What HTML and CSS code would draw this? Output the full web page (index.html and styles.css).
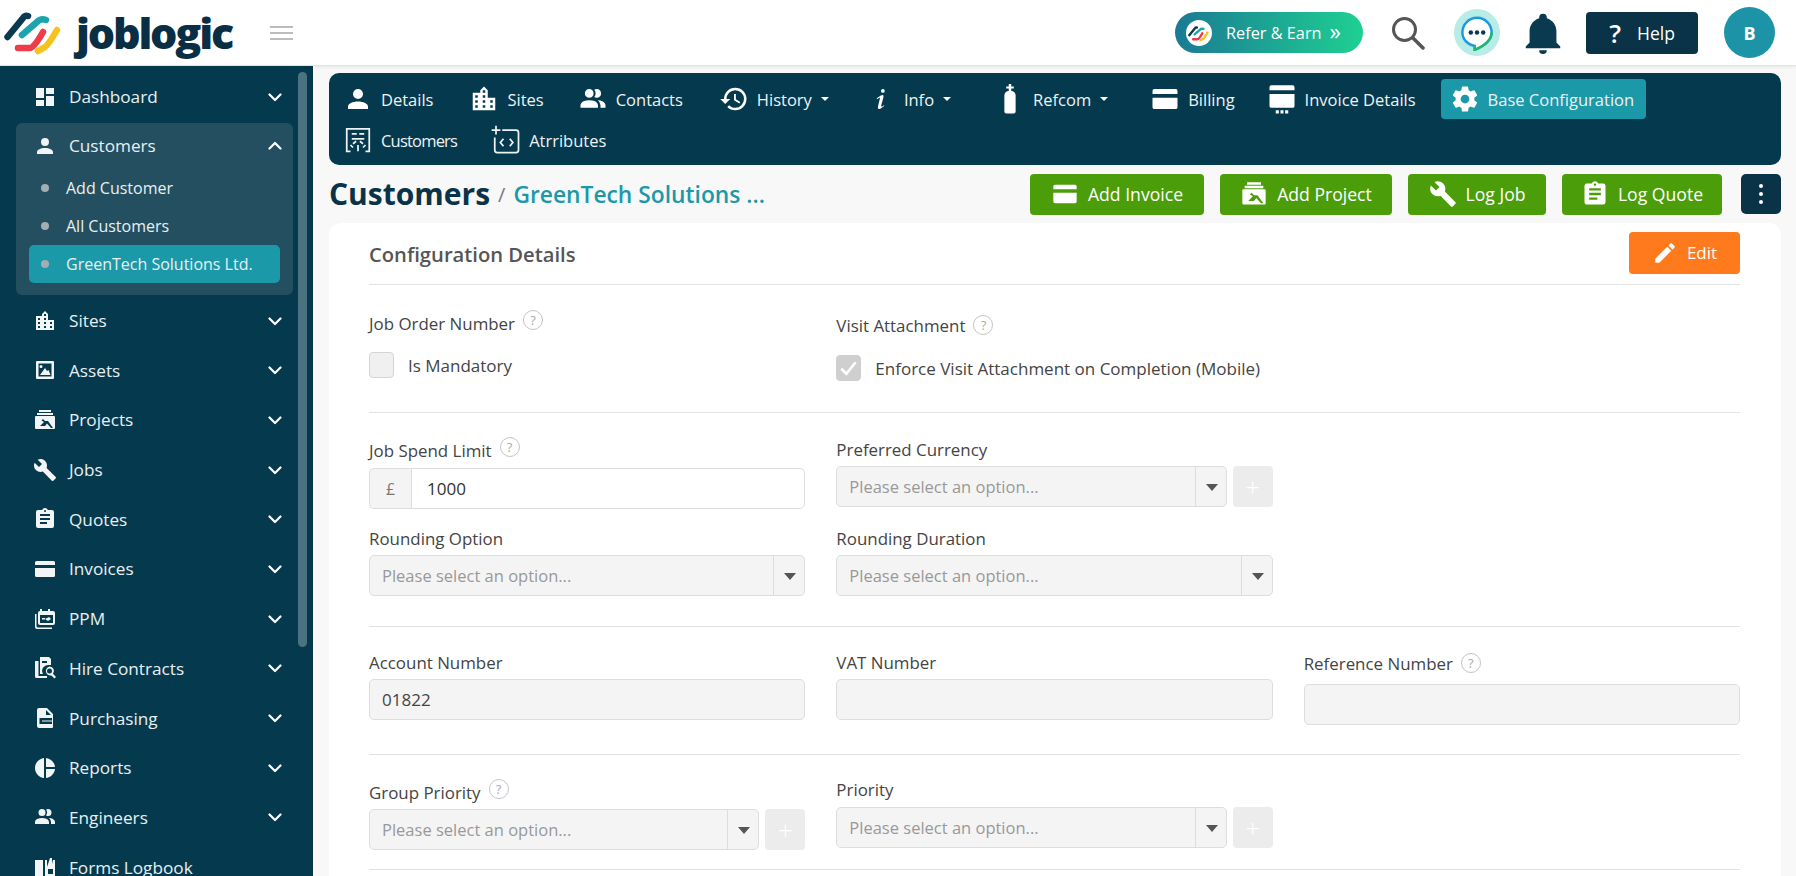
FILE: index.html
```html
<!DOCTYPE html>
<html>
  <head>
    <title>Joblogic - Base Configuration</title>
    <link rel="stylesheet" href="styles.css">
  </head>

  <body>
    <svg class="icon-defs">
      <symbol id="i-logo" viewBox="0 0 60 60">
        <path d="M3.5 36 L19 17 Q21 14 24 15" stroke="#0a3a50" stroke-width="6.5" stroke-linecap="round" fill="none"/>
        <path d="M18 34 L33 21 Q37 17 42 19" stroke="#1ba3ae" stroke-width="6.5" stroke-linecap="round" fill="none"/>
        <path d="M14 47 L26 47 Q30 47 39 31" stroke="#ee3d48" stroke-width="6.5" stroke-linecap="round" fill="none"/>
        <path d="M34 50 L41 46 Q45 43 53 29" stroke="#f6c21c" stroke-width="6.5" stroke-linecap="round" fill="none"/>
      </symbol>
      <symbol id="i-dashboard" viewBox="0 0 24 24"><path d="M13,3V9H21V3M13,21H21V11H13M3,21H11V15H3M3,13H11V3H3V13Z"/></symbol>
      <symbol id="i-user" viewBox="0 0 24 24"><path d="M12,4A4,4 0 0,1 16,8A4,4 0 0,1 12,12A4,4 0 0,1 8,8A4,4 0 0,1 12,4M12,14C16.42,14 20,15.79 20,18V20H4V18C4,15.79 7.58,14 12,14Z"/></symbol>
      <symbol id="i-city" viewBox="0 0 24 24"><path d="M19,15H17V13H19M19,19H17V17H19M13,7H11V5H13M13,11H11V9H13M13,15H11V13H13M13,19H11V17H13M7,11H5V9H7M7,15H5V13H7M7,19H5V17H7M15,11V5L12,2L9,5V7H3V21H21V11H15Z"/></symbol>
      <symbol id="i-asset" viewBox="0 0 24 24"><path fill-rule="evenodd" d="M4 3H20A1 1 0 0 1 21 4V20A1 1 0 0 1 20 21H4A1 1 0 0 1 3 20V4A1 1 0 0 1 4 3ZM5.5 5.5V18.5H18.5V5.5ZM8 7A1.5 1.5 0 1 1 8 10A1.5 1.5 0 0 1 8 7ZM7 17L12 10L14 13L15.5 12L17.5 17Z"/></symbol>
      <symbol id="i-project" viewBox="0 0 24 24"><path fill-rule="evenodd" d="M6 2H18V4H6ZM4 5H20V7H4ZM3 8H21A1 1 0 0 1 22 9V20A1 1 0 0 1 21 21H3A1 1 0 0 1 2 20V9A1 1 0 0 1 3 8ZM10 11L8.5 12.5L11 14L7 18H12L14 15.5L18 20H20L15 13L12 13Z"/></symbol>
      <symbol id="i-wrench" viewBox="0 0 24 24"><path d="M22.7,19L13.6,9.9C14.5,7.6 14,4.9 12.1,3C10.1,1 7.1,0.6 4.7,1.7L9,6L6,9L1.6,4.7C0.4,7.1 0.9,10.1 2.9,12.1C4.8,14 7.5,14.5 9.8,13.6L18.9,22.7C19.3,23.1 19.9,23.1 20.3,22.7L22.6,20.4C23.1,20 23.1,19.3 22.7,19Z"/></symbol>
      <symbol id="i-quote" viewBox="0 0 24 24"><path d="M17,9H7V7H17M17,13H7V11H17M14,17H7V15H14M12,3A1,1 0 0,1 13,4A1,1 0 0,1 12,5A1,1 0 0,1 11,4A1,1 0 0,1 12,3M19,3H14.82C14.4,1.84 13.3,1 12,1C10.7,1 9.6,1.84 9.18,3H5A2,2 0 0,0 3,5V19A2,2 0 0,0 5,21H19A2,2 0 0,0 21,19V5A2,2 0 0,0 19,3Z"/></symbol>
      <symbol id="i-card" viewBox="0 0 24 24"><path fill-rule="evenodd" d="M3.5 4H20.5A1.5 1.5 0 0 1 22 5.5V18.5A1.5 1.5 0 0 1 20.5 20H3.5A1.5 1.5 0 0 1 2 18.5V5.5A1.5 1.5 0 0 1 3.5 4ZM2 8V11H22V8Z"/></symbol>
      <symbol id="i-card-more" viewBox="0 0 24 24"><path fill-rule="evenodd" d="M3.5 1H20.5A1.5 1.5 0 0 1 22 2.5V17.5A1.5 1.5 0 0 1 20.5 19H3.5A1.5 1.5 0 0 1 2 17.5V2.5A1.5 1.5 0 0 1 3.5 1ZM2 5V8H22V5ZM7 21H9.5V23.5H7ZM10.8 21H13.2V23.5H10.8ZM14.5 21H17V23.5H14.5Z"/></symbol>
      <symbol id="i-ppm" viewBox="0 0 24 24"><path fill-rule="evenodd" d="M7 2H9V4H15V2H17V4H20A2 2 0 0 1 22 6V16A2 2 0 0 1 20 18H7A2 2 0 0 1 5 16V6A2 2 0 0 1 7 4ZM7 8V16H20V8ZM2 7H3.5V19A1.5 1.5 0 0 0 5 20.5H19V22H4A2 2 0 0 1 2 20ZM16 10L18 12L15 14L12 12ZM9 11H12V12.5H9Z"/></symbol>
      <symbol id="i-hire" viewBox="0 0 24 24"><path fill-rule="evenodd" d="M7 1H16L18 3V9H16A6 6 0 0 0 10 18H7ZM9 5V7H14V5ZM2 5H5.5V20H14V22H3.5A1.5 1.5 0 0 1 2 20.5ZM16.5 10.5A4.5 4.5 0 0 1 20 17.8L23 21L21.5 22.5L18.3 19.4A4.5 4.5 0 1 1 16.5 10.5ZM16.5 12.5A2.5 2.5 0 1 0 16.5 17.5A2.5 2.5 0 0 0 16.5 12.5Z"/></symbol>
      <symbol id="i-purchase" viewBox="0 0 24 24"><path fill-rule="evenodd" d="M6 2H14L20 8V21A1 1 0 0 1 19 22H6A2 2 0 0 1 4 20V4A2 2 0 0 1 6 2ZM13 4V9H18ZM6.5 12V18H19V15.5H9V14.5H19V12Z"/></symbol>
      <symbol id="i-pie" viewBox="0 0 24 24"><path d="M11,2V22C5.9,21.5 2,17.2 2,12C2,6.8 5.9,2.5 11,2M13,2V11H22C21.5,6.2 17.8,2.5 13,2M13,13V22C17.7,21.5 21.5,17.8 22,13H13Z"/></symbol>
      <symbol id="i-people" viewBox="0 0 24 24"><path d="M16 17V19H2V17S2 13 9 13 16 17 16 17M12.5 7.5A3.5 3.5 0 1 0 9 11A3.5 3.5 0 0 0 12.5 7.5M15.94 13A5.32 5.32 0 0 1 18 17V19H22V17S22 13.37 15.94 13M15 4A3.39 3.39 0 0 0 13.07 4.59A5 5 0 0 1 13.07 10.41A3.39 3.39 0 0 0 15 11A3.5 3.5 0 0 0 15 4Z"/></symbol>
      <symbol id="i-book" viewBox="0 0 24 24"><path fill-rule="evenodd" d="M2 5H10V21H2ZM12 5H14V12L17 3H19V9L20 5H22V21H12ZM15 14V19H20V14Z"/></symbol>
      <symbol id="i-history" viewBox="0 0 24 24"><path d="M13.5,8H12V13L16.28,15.54L17,14.33L13.5,12.25V8M13,3A9,9 0 0,0 4,12H1L4.96,16.03L9,12H6A7,7 0 0,1 13,5A7,7 0 0,1 20,12A7,7 0 0,1 13,19C11.07,19 9.32,18.21 8.06,16.94L6.64,18.36C8.27,20 10.5,21 13,21A9,9 0 0,0 22,12A9,9 0 0,0 13,3"/></symbol>
      <symbol id="i-info" viewBox="0 0 24 24"><path d="M13.5,4A1.5,1.5 0 0,0 12,5.5A1.5,1.5 0 0,0 13.5,7A1.5,1.5 0 0,0 15,5.5A1.5,1.5 0 0,0 13.5,4M13.14,8.77C11.95,8.87 8.7,11.46 8.7,11.46C8.5,11.61 8.56,11.6 8.72,11.88C8.88,12.15 8.86,12.17 9.05,12.04C9.25,11.91 9.58,11.7 10.13,11.36C12.25,10 10.47,13.14 9.56,18.43C9.2,21.05 11.56,19.7 12.17,19.3C12.77,18.91 14.38,17.8 14.54,17.69C14.76,17.54 14.6,17.42 14.43,17.17C14.31,17 14.19,17.12 14.19,17.12C13.54,17.55 12.35,18.45 12.19,17.88C12,17.31 13.22,13.4 13.89,10.71C14,10.07 14.3,8.67 13.14,8.77Z"/></symbol>
      <symbol id="i-cylinder" viewBox="0 0 24 24"><path d="M11 0H13V2H15V3.5H13V5.5A3.5 3.5 0 0 1 16.5 9V22A1.5 1.5 0 0 1 15 23.5H9A1.5 1.5 0 0 1 7.5 22V9A3.5 3.5 0 0 1 11 5.5V3.5H9V2H11Z"/></symbol>
      <symbol id="i-cog" viewBox="0 0 24 24"><path d="M12,15.5A3.5,3.5 0 0,1 8.5,12A3.5,3.5 0 0,1 12,8.5A3.5,3.5 0 0,1 15.5,12A3.5,3.5 0 0,1 12,15.5M19.43,12.97C19.47,12.65 19.5,12.33 19.5,12C19.5,11.67 19.47,11.34 19.43,11L21.54,9.37C21.73,9.22 21.78,8.95 21.66,8.73L19.66,5.27C19.54,5.05 19.27,4.96 19.05,5.05L16.56,6.05C16.04,5.66 15.5,5.32 14.87,5.07L14.5,2.42C14.46,2.18 14.25,2 14,2H10C9.75,2 9.54,2.18 9.5,2.42L9.13,5.07C8.5,5.32 7.96,5.66 7.44,6.05L4.95,5.05C4.73,4.96 4.46,5.05 4.34,5.27L2.34,8.73C2.21,8.95 2.27,9.22 2.46,9.37L4.57,11C4.53,11.34 4.5,11.67 4.5,12C4.5,12.33 4.53,12.65 4.57,12.97L2.46,14.63C2.27,14.78 2.21,15.05 2.34,15.27L4.34,18.73C4.46,18.95 4.73,19.03 4.95,18.95L7.44,17.94C7.96,18.34 8.5,18.68 9.13,18.93L9.5,21.58C9.54,21.82 9.75,22 10,22H14C14.25,22 14.46,21.82 14.5,21.58L14.87,18.93C15.5,18.67 16.04,18.34 16.56,17.94L19.05,18.95C19.27,19.03 19.54,18.95 19.66,18.73L21.66,15.27C21.78,15.05 21.73,14.78 21.54,14.63L19.43,12.97Z"/></symbol>
      <symbol id="i-customers" viewBox="0 0 24 24"><path fill="none" stroke="currentColor" stroke-width="1.4" d="M6 21H3V3H21V21H18M7 7H11M13 7H17M7 11H17M8 15L10.5 13M16 15L13.5 13M12 16V21M8 18L6 16M16 18L18 16"/></symbol>
      <symbol id="i-attr" viewBox="0 0 24 24"><path fill="none" stroke="currentColor" stroke-width="1.4" d="M9 4H20A2 2 0 0 1 22 6V20A2 2 0 0 1 20 22H5A2 2 0 0 1 3 20V10M4 0.5V7.5M0.5 4H7.5M10 11L7.5 14L10 17M15 11L17.5 14L15 17"/></symbol>
      <symbol id="i-pencil" viewBox="0 0 24 24"><path d="M20.71,7.04C21.1,6.65 21.1,6 20.71,5.63L18.37,3.29C18,2.9 17.35,2.9 16.96,3.29L15.12,5.12L18.87,8.87M3,17.25V21H6.75L17.81,9.93L14.06,6.18L3,17.25Z"/></symbol>
      <symbol id="i-bell" viewBox="0 0 24 24"><path d="M21,19V20H3V19L5,17V11C5,7.9 7.03,5.17 10,4.29C10,4.19 10,4.1 10,4A2,2 0 0,1 12,2A2,2 0 0,1 14,4C14,4.1 14,4.19 14,4.29C16.97,5.17 19,7.9 19,11V17L21,19M14,21A2,2 0 0,1 12,23A2,2 0 0,1 10,21"/></symbol>
      <symbol id="i-chevron" viewBox="0 0 14 14"><path d="M1.5 4.5L7 10L12.5 4.5" fill="none" stroke="currentColor" stroke-width="2.2" stroke-linecap="round" stroke-linejoin="round"/></symbol>
    </svg>

    <header class="topbar">
      <div class="brand">
        <svg class="brand-mark"><use href="#i-logo"/></svg>
        <span class="brand-name">joblogic</span>
        <div class="burger"><span></span><span></span><span></span></div>
      </div>
      <div class="top-actions">
        <a class="refer-btn">
          <span class="refer-logo"><svg><use href="#i-logo"/></svg></span>
          <span>Refer &amp; Earn</span>
          <span class="refer-arrows">»</span>
        </a>
        <svg class="search-icon" viewBox="0 0 34 34">
          <circle cx="13.5" cy="13.5" r="11" fill="none" stroke="#555" stroke-width="3"/>
          <path d="M22 22L32 32" stroke="#555" stroke-width="3.5" stroke-linecap="round"/>
        </svg>
        <span class="chat-halo">
          <svg viewBox="0 0 32 32">
            <path d="M16 2.5A13 13 0 0 0 3 15.5C3 22 8.5 27 14 27.5V31C21 28 29 23 29 15.5A13 13 0 0 0 16 2.5Z" fill="#fff" stroke="#1c9adf" stroke-width="2.2"/>
            <path d="M14 27.5V31C21 28 29 23 29 15.5" fill="none" stroke="#21b86a" stroke-width="2.2"/>
            <circle cx="10.5" cy="15.5" r="2" fill="#0a3a50"/><circle cx="16" cy="15.5" r="2" fill="#0a3a50"/><circle cx="21.5" cy="15.5" r="2" fill="#0a3a50"/>
          </svg>
        </span>
        <svg class="bell-icon"><use href="#i-bell"/></svg>
        <a class="help-btn"><span class="help-mark">?</span> Help</a>
        <span class="avatar">B</span>
      </div>
    </header>

    <div class="app">
      <aside class="sidebar">
        <div class="nav-item"><svg class="nav-icon"><use href="#i-dashboard"/></svg><span>Dashboard</span><svg class="chev"><use href="#i-chevron"/></svg></div>
        <div class="nav-group">
          <div class="nav-item nav-head"><svg class="nav-icon"><use href="#i-user"/></svg><span>Customers</span><svg class="chev chev-up"><use href="#i-chevron"/></svg></div>
          <div class="sub-item"><i></i>Add Customer</div>
          <div class="sub-item"><i></i>All Customers</div>
          <div class="sub-item sub-active"><i></i>GreenTech Solutions Ltd.</div>
        </div>
        <div class="nav-item"><svg class="nav-icon"><use href="#i-city"/></svg><span>Sites</span><svg class="chev"><use href="#i-chevron"/></svg></div>
        <div class="nav-item"><svg class="nav-icon"><use href="#i-asset"/></svg><span>Assets</span><svg class="chev"><use href="#i-chevron"/></svg></div>
        <div class="nav-item"><svg class="nav-icon"><use href="#i-project"/></svg><span>Projects</span><svg class="chev"><use href="#i-chevron"/></svg></div>
        <div class="nav-item"><svg class="nav-icon"><use href="#i-wrench"/></svg><span>Jobs</span><svg class="chev"><use href="#i-chevron"/></svg></div>
        <div class="nav-item"><svg class="nav-icon"><use href="#i-quote"/></svg><span>Quotes</span><svg class="chev"><use href="#i-chevron"/></svg></div>
        <div class="nav-item"><svg class="nav-icon"><use href="#i-card"/></svg><span>Invoices</span><svg class="chev"><use href="#i-chevron"/></svg></div>
        <div class="nav-item"><svg class="nav-icon"><use href="#i-ppm"/></svg><span>PPM</span><svg class="chev"><use href="#i-chevron"/></svg></div>
        <div class="nav-item"><svg class="nav-icon"><use href="#i-hire"/></svg><span>Hire Contracts</span><svg class="chev"><use href="#i-chevron"/></svg></div>
        <div class="nav-item"><svg class="nav-icon"><use href="#i-purchase"/></svg><span>Purchasing</span><svg class="chev"><use href="#i-chevron"/></svg></div>
        <div class="nav-item"><svg class="nav-icon"><use href="#i-pie"/></svg><span>Reports</span><svg class="chev"><use href="#i-chevron"/></svg></div>
        <div class="nav-item"><svg class="nav-icon"><use href="#i-people"/></svg><span>Engineers</span><svg class="chev"><use href="#i-chevron"/></svg></div>
        <div class="nav-item"><svg class="nav-icon"><use href="#i-book"/></svg><span>Forms Logbook</span></div>
        <div class="side-scroll"></div>
      </aside>

      <main class="content">
        <nav class="tabs">
          <div class="tab-row">
            <a class="tab"><svg><use href="#i-user"/></svg>Details</a>
            <a class="tab ml-2"><svg><use href="#i-city"/></svg>Sites</a>
            <a class="tab"><svg><use href="#i-people"/></svg>Contacts</a>
            <a class="tab ml-2"><svg><use href="#i-history"/></svg>History<b class="caret"></b></a>
            <a class="tab ml-3"><svg><use href="#i-info"/></svg>Info<b class="caret"></b></a>
            <a class="tab ml-10"><svg><use href="#i-cylinder"/></svg>Refcom<b class="caret"></b></a>
            <a class="tab ml-8"><svg><use href="#i-card"/></svg>Billing</a>
            <a class="tab ml-n2"><svg><use href="#i-card-more"/></svg>Invoice Details</a>
            <a class="tab tab-active"><svg><use href="#i-cog"/></svg>Base Configuration</a>
          </div>
          <div class="tab-row">
            <a class="tab tab-tight"><svg><use href="#i-customers"/></svg>Customers</a>
            <a class="tab"><svg><use href="#i-attr"/></svg>Atrributes</a>
          </div>
        </nav>

        <div class="title-row">
          <h1 class="page-title">Customers</h1>
          <span class="crumb-sep">/</span>
          <span class="crumb-name">GreenTech Solutions ...</span>
          <div class="title-actions">
            <a class="btn-green btn-invoice"><svg><use href="#i-card"/></svg>Add Invoice</a>
            <a class="btn-green btn-project"><svg><use href="#i-project"/></svg>Add Project</a>
            <a class="btn-green btn-job"><svg><use href="#i-wrench"/></svg>Log Job</a>
            <a class="btn-green btn-quote"><svg><use href="#i-quote"/></svg>Log Quote</a>
            <a class="btn-more"><i></i><i></i><i></i></a>
          </div>
        </div>

        <section class="card">
          <div class="card-head">
            <h2>Configuration Details</h2>
            <a class="btn-edit"><svg><use href="#i-pencil"/></svg>Edit</a>
          </div>

          <div class="form-section section-one">
            <div class="field">
              <label>Job Order Number <span class="hint hint-up">?</span></label>
              <div class="check-row"><span class="check"></span>Is Mandatory</div>
            </div>
            <div class="field mt-2">
              <label>Visit Attachment <span class="hint">?</span></label>
              <div class="check-row mt-13"><span class="check check-on">
                <svg viewBox="0 0 16 16"><path d="M3 8.5L6.5 12L13 4" fill="none" stroke="#fff" stroke-width="1.8"/></svg>
              </span>Enforce Visit Attachment on Completion (Mobile)</div>
            </div>
          </div>

          <div class="form-section section-two">
            <div class="field mt-1">
              <label>Job Spend Limit <span class="hint hint-up">?</span></label>
              <div class="input-group mt-1"><span class="addon">£</span><input class="text-input" value="1000"></div>
            </div>
            <div class="field">
              <label>Preferred Currency</label>
              <div class="select-line">
                <div class="select-box"><span>Please select an option...</span><b class="select-arrow"></b></div>
                <span class="plus-btn">+</span>
              </div>
            </div>
            <div class="empty-cell"></div>
            <div class="field">
              <label>Rounding Option</label>
              <div class="select-box"><span>Please select an option...</span><b class="select-arrow"></b></div>
            </div>
            <div class="field">
              <label>Rounding Duration</label>
              <div class="select-box"><span>Please select an option...</span><b class="select-arrow"></b></div>
            </div>
          </div>

          <div class="form-section section-three">
            <div class="field">
              <label>Account Number</label>
              <input class="text-input input-off" value="01822" disabled>
            </div>
            <div class="field">
              <label>VAT Number</label>
              <input class="text-input input-off" disabled>
            </div>
            <div class="field mt-1">
              <label>Reference Number <span class="hint">?</span></label>
              <input class="text-input input-off mt-4" disabled>
            </div>
          </div>

          <div class="form-section section-four">
            <div class="field mt-3">
              <label>Group Priority <span class="hint hint-up">?</span></label>
              <div class="select-line">
                <div class="select-box"><span>Please select an option...</span><b class="select-arrow"></b></div>
                <span class="plus-btn">+</span>
              </div>
            </div>
            <div class="field">
              <label>Priority</label>
              <div class="select-line mt-1">
                <div class="select-box"><span>Please select an option...</span><b class="select-arrow"></b></div>
                <span class="plus-btn">+</span>
              </div>
            </div>
          </div>
        </section>
      </main>
    </div>
  </body>
</html>
```

FILE: styles.css
```css
* {
  box-sizing: border-box;
}
html,
body {
  margin: 0;
  height: 100%;
  overflow: hidden;
}
body {
  font-family: "Open Sans", sans-serif;
  font-size: 16px;
  color: #444;
  background-color: #f8f8f8;
}
a {
  text-decoration: none;
}
h1,
h2 {
  margin: 0;
}
.icon-defs {
  position: absolute;
  width: 0;
  height: 0;
}
.mt-1 {
  margin-top: 1px;
}
.mt-2 {
  margin-top: 2px;
}
.mt-3 {
  margin-top: 3px;
}
.mt-4 {
  margin-top: 4px;
}
.ml-2 {
  margin-left: 2px;
}
.ml-3 {
  margin-left: 3px;
}
.ml-8 {
  margin-left: 8px;
}
.ml-10 {
  margin-left: 10px;
}
.ml-n2 {
  margin-left: -2px;
}

/* top bar */
.topbar {
  display: flex;
  align-items: center;
  justify-content: space-between;
  height: 66px;
  padding: 0 21px 0 4px;
  background-color: #fff;
  border-bottom: 1px solid #e4e4e4;
  box-shadow: 0 1px 3px rgba(0, 0, 0, 0.08);
}
.brand {
  display: flex;
  align-items: center;
}
.brand-mark {
  width: 60px;
  height: 60px;
  margin-top: -4px;
}
.brand-name {
  width: 171px;
  margin-left: 12px;
  font-weight: 800;
  font-size: 43px;
  line-height: 50px;
  letter-spacing: -2.2px;
  color: #0a2f44;
}
.burger {
  display: flex;
  flex-direction: column;
  gap: 4px;
  width: 23px;
  margin-left: 23px;
}
.burger span {
  height: 2px;
  background-color: #bdbdbd;
}
.top-actions {
  display: flex;
  align-items: center;
}
.refer-btn {
  display: flex;
  align-items: center;
  width: 188px;
  height: 41px;
  padding: 0 0 0 11px;
  border-radius: 21px;
  color: #fff;
  font-size: 16.3px;
  background: linear-gradient(90deg, #1a7a94, #1fd092);
}
.refer-logo {
  display: flex;
  align-items: center;
  justify-content: center;
  width: 26px;
  height: 26px;
  margin-right: 14px;
  border-radius: 50%;
  background-color: #fff;
}
.refer-logo svg {
  width: 22px;
  height: 22px;
}
.refer-arrows {
  margin-left: 8px;
  margin-top: -4px;
  font-size: 23px;
  line-height: 24px;
}
.search-icon {
  width: 34px;
  height: 34px;
  margin-left: 28px;
}
.chat-halo {
  display: flex;
  align-items: center;
  justify-content: center;
  width: 46px;
  height: 47px;
  margin-left: 29px;
  border-radius: 50%;
  background-color: #b8ece6;
}
.chat-halo svg {
  width: 36px;
  height: 36px;
}
.bell-icon {
  width: 46px;
  height: 46px;
  margin-left: 20px;
  fill: #0a3a50;
}
.help-btn {
  display: flex;
  align-items: center;
  justify-content: center;
  width: 112px;
  height: 42px;
  margin-left: 20px;
  border-radius: 4px;
  color: #fff;
  font-size: 17.5px;
  background-color: #0a3347;
}
.help-mark {
  margin-right: 16px;
  font-size: 26px;
  line-height: 30px;
  font-weight: 600;
}
.avatar {
  display: flex;
  align-items: center;
  justify-content: center;
  width: 51px;
  height: 51px;
  margin-left: 26px;
  border-radius: 50%;
  color: #fff;
  font-weight: 700;
  font-size: 18px;
  background-color: #1c93a6;
}

/* sidebar */
.app {
  display: flex;
  height: calc(100% - 66px);
}
.sidebar {
  position: relative;
  flex: 0 0 313px;
  padding-top: 6px;
  overflow: hidden;
  font-size: 17.2px;
  color: #e9eff1;
  background-color: #053a4e;
}
.nav-item {
  display: flex;
  align-items: center;
  height: 49.7px;
  padding-left: 33px;
}
.nav-icon {
  width: 24px;
  height: 24px;
  margin-right: 12px;
  fill: #f2f5f6;
  flex-shrink: 0;
}
.chev {
  width: 14px;
  height: 14px;
  margin-left: auto;
  margin-right: 31px;
  color: #fff;
}
.chev-up {
  transform: rotate(180deg);
}
.nav-group {
  margin: 1px 20px 1px 16px;
  padding-bottom: 12px;
  border-radius: 6px;
  background-color: #234f61;
}
.nav-head {
  height: 46px;
  padding-left: 17px;
}
.nav-head .chev {
  margin-right: 11px;
}
.sub-item {
  display: flex;
  align-items: center;
  height: 38px;
  margin: 0 13px;
  padding-left: 12px;
  border-radius: 5px;
  font-size: 16px;
}
.sub-item i {
  width: 8px;
  height: 8px;
  margin-right: 17px;
  border-radius: 50%;
  background-color: #a3adb2;
}
.sub-active {
  background-color: #1b99a8;
}
.side-scroll {
  position: absolute;
  top: 6px;
  left: 298px;
  width: 9px;
  height: 575px;
  border-radius: 5px;
  background-color: #4b7281;
}

/* content */
.content {
  display: flex;
  flex-direction: column;
  flex: 1;
  min-width: 0;
  overflow: hidden;
  padding: 7px 15px 0 14px;
  border-left: 2px solid #fff;
}
.tabs {
  display: flex;
  flex-direction: column;
  flex-shrink: 0;
  gap: 1px;
  height: 92px;
  padding: 6px 5px 5px;
  border-radius: 10px;
  background-color: #053a4e;
}
.tab-row {
  display: flex;
  column-gap: 13px;
}
.tab {
  display: flex;
  align-items: center;
  height: 40px;
  padding: 0 12px;
  border-radius: 4px;
  font-size: 16.5px;
  color: #eef2f3;
  fill: #fff;
  white-space: nowrap;
}
.tab svg {
  width: 30px;
  height: 30px;
  margin-right: 8px;
  margin-left: -3px;
}
.tab-active {
  background-color: #1b99a8;
}
.tab-tight {
  letter-spacing: -0.8px;
}
.caret {
  width: 0;
  height: 0;
  margin-left: 9px;
  border-left: 4px solid transparent;
  border-right: 4px solid transparent;
  border-top: 4px solid #fff;
}
.title-row {
  display: flex;
  flex-shrink: 0;
  align-items: center;
  height: 58px;
}
.page-title {
  padding-bottom: 2px;
  font-size: 30px;
  font-weight: 700;
  color: #0a3347;
}
.crumb-sep {
  margin: 0 8px 0 8px;
  font-size: 20px;
  color: #777;
}
.crumb-name {
  font-size: 22.8px;
  font-weight: 600;
  color: #1b99a8;
}
.title-actions {
  display: flex;
  align-items: center;
  margin-left: auto;
}
.btn-green {
  display: flex;
  align-items: center;
  justify-content: center;
  height: 41px;
  margin-right: 16px;
  border-radius: 4px;
  color: #fff;
  fill: #fff;
  font-size: 17.6px;
  background-color: #4c9d0a;
}
.btn-green svg {
  width: 28px;
  height: 28px;
  margin-right: 9px;
}
.btn-invoice {
  width: 174px;
}
.btn-project {
  width: 172px;
}
.btn-job {
  width: 138px;
}
.btn-quote {
  width: 160px;
  margin-right: 19px;
}
.btn-more {
  display: flex;
  flex-direction: column;
  align-items: center;
  justify-content: center;
  gap: 4px;
  width: 40px;
  height: 40px;
  border-radius: 5px;
  background-color: #0a3347;
}
.btn-more i {
  width: 4px;
  height: 4px;
  border-radius: 50%;
  background-color: #fff;
}

/* card */
.card {
  flex: 1;
  overflow: hidden;
  padding: 0 41px 0 40px;
  border-radius: 12px 12px 0 0;
  background-color: #fff;
}
.card-head {
  display: flex;
  align-items: center;
  justify-content: space-between;
  height: 62px;
  padding-top: 1px;
  border-bottom: 1px solid #e2e2e2;
}
.card-head h2 {
  font-size: 20.2px;
  font-weight: 600;
  color: #555;
}
.btn-edit {
  display: flex;
  align-items: center;
  justify-content: center;
  width: 111px;
  height: 42px;
  margin-bottom: 3px;
  border-radius: 4px;
  color: #fff;
  fill: #fff;
  font-size: 17px;
  background-color: #ff7a1c;
}
.btn-edit svg {
  width: 26px;
  height: 26px;
  margin-right: 9px;
}
.form-section {
  display: grid;
  grid-template-columns: repeat(3, 1fr);
  align-content: start;
  column-gap: 31px;
  border-bottom: 1px solid #e2e2e2;
}
.section-one {
  height: 128px;
  padding-top: 27px;
}
.section-two {
  height: 214px;
  padding-top: 25px;
  row-gap: 18px;
}
.section-three {
  height: 128px;
  padding-top: 24px;
}
.section-four {
  height: 115px;
  padding-top: 23px;
}
.field label {
  display: flex;
  align-items: center;
  height: 28px;
  padding-bottom: 6px;
  font-size: 16.9px;
  font-weight: 500;
  color: #444;
}
.hint {
  display: inline-flex;
  align-items: center;
  justify-content: center;
  width: 20px;
  height: 20px;
  margin-left: 8px;
  border: 1px solid #c4c4c4;
  border-radius: 50%;
  font-size: 13px;
  font-weight: 400;
  color: #aaa;
}
.hint-up {
  margin-top: -6px;
}
.check-row {
  display: flex;
  align-items: center;
  margin-top: 12px;
  font-size: 17px;
  font-weight: 500;
}
.mt-13 {
  margin-top: 13px;
}
.check {
  display: flex;
  width: 25px;
  height: 26px;
  margin-right: 14px;
  border: 1px solid #d4d4d4;
  border-radius: 4px;
  background-color: #f0f0f0;
}
.check-on {
  background-color: #cfcfcf;
  border-color: #cfcfcf;
}
.text-input {
  display: block;
  width: 100%;
  height: 41px;
  padding: 0 15px;
  border: 1px solid #ddd;
  border-radius: 5px;
  font-family: "Open Sans", sans-serif;
  font-size: 17px;
  color: #333;
  background-color: #fff;
}
.input-off {
  padding: 0 12px;
  color: #444;
  background-color: #f4f4f4;
}
.input-group {
  display: flex;
  height: 41px;
}
.input-group .text-input {
  border-radius: 0 5px 5px 0;
}
.addon {
  display: flex;
  align-items: center;
  justify-content: center;
  flex: 0 0 42px;
  border: 1px solid #ddd;
  border-right: 0;
  border-radius: 5px 0 0 5px;
  color: #777;
  background-color: #f4f4f4;
}
.select-line {
  display: flex;
  gap: 6px;
}
.select-box {
  display: flex;
  flex: 1;
  align-items: center;
  justify-content: space-between;
  height: 41px;
  padding-left: 12px;
  border: 1px solid #ddd;
  border-radius: 5px;
  font-size: 16.5px;
  color: #999;
  background-color: #f4f4f4;
}
.select-arrow {
  position: relative;
  flex: 0 0 31px;
  height: 100%;
  border-left: 1px solid #ddd;
}
.select-arrow::after {
  content: "";
  position: absolute;
  top: 17px;
  left: 10px;
  border-left: 6px solid transparent;
  border-right: 6px solid transparent;
  border-top: 7px solid #555;
}
.plus-btn {
  display: flex;
  align-items: center;
  justify-content: center;
  flex: 0 0 40px;
  height: 41px;
  border-radius: 4px;
  color: #fff;
  font-size: 26px;
  font-weight: 300;
  background-color: #ececec;
}
```
